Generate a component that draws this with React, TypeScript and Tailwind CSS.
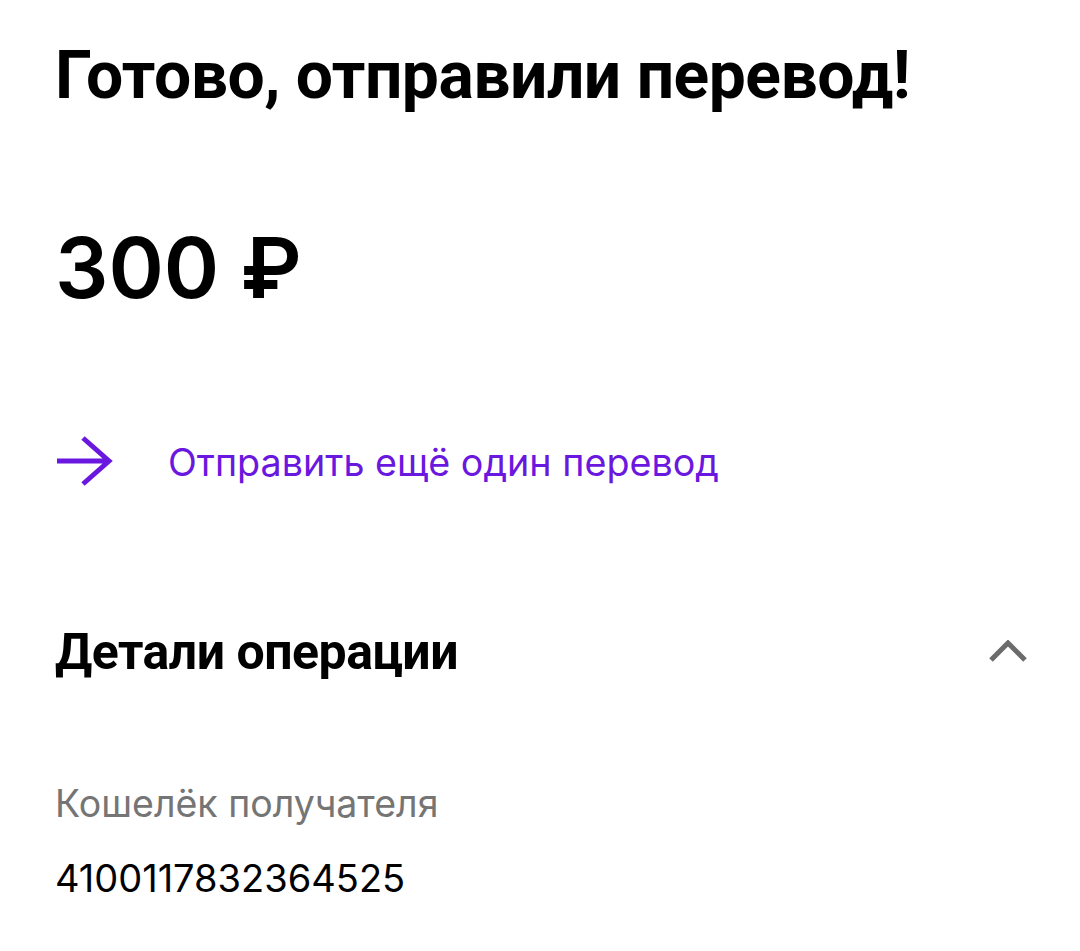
export default function App() {
  return (
    <div className="w-[1080px] h-[951px] bg-white overflow-hidden font-['Inter',sans-serif]">
      <div className="pl-[55px] pr-[52px]">
        <h1 className="pt-[36px] text-[66px] leading-[80px] font-bold text-black tracking-[-0.5px] font-['Roboto','Liberation_Sans',sans-serif]">
          Готово, отправили перевод!
        </h1>
        <div className="mt-[102px] text-[84px] leading-[100px] font-semibold text-black">
          300 ₽
        </div>
        <div className="mt-[114px] flex items-center h-[60px]">
          <svg width="56" height="52" viewBox="0 0 56 52" className="shrink-0 ml-[2px]">
            <path d="M0 25 H52 M26 2 L52 25 L26 48" fill="none" stroke="#6a17e0" strokeWidth="5" />
          </svg>
          <span className="ml-[55px] text-[37.7px] text-[#6a17e0]">
            Отправить ещё один перевод
          </span>
        </div>
        <div className="mt-[130px] flex items-center justify-between h-[60px]">
          <span className="text-[50px] font-bold text-black tracking-[-0.5px] font-['Roboto','Liberation_Sans',sans-serif]">
            Детали операции
          </span>
          <svg width="40" height="24" viewBox="0 0 40 24">
            <path d="M3 20 L20 3 L37 20" fill="none" stroke="#6b6b6b" strokeWidth="5" />
          </svg>
        </div>
        <div className="mt-[100px] text-[37.5px] leading-[44px] text-[#757575]">
          Кошелёк получателя
        </div>
        <div className="mt-[30px] text-[38px] leading-[44px] text-black">
          4100117832364525
        </div>
      </div>
    </div>
  );
}
